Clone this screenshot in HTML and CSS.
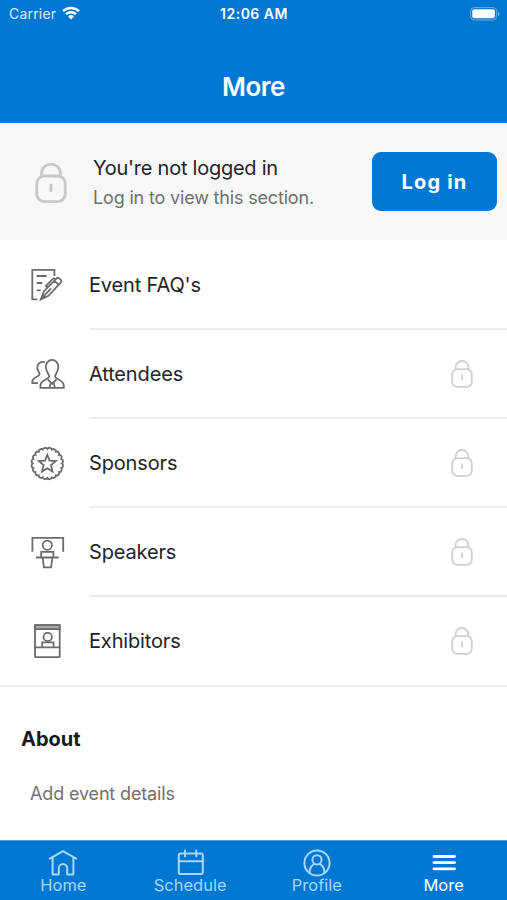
FILE: index.html
```html
<!DOCTYPE html>
<html lang="en">
<head>
<meta charset="utf-8">
<title>More</title>
<link rel="stylesheet" href="styles.css">
</head>
<body>
<svg class="defs" width="0" height="0" aria-hidden="true">
  <symbol id="lock" viewBox="0 0 22 28">
    <rect x="1.2" y="9.2" width="19.6" height="17.6" rx="5.2"/>
    <path d="M4.6 9.4V7.2a6.4 6.2 0 0 1 12.8 0v2.2M11 14.500v5.500"/>
  </symbol>
</svg>
<div class="app">
  <header class="header">
    <div class="status">
      <div class="carrier"><span>Carrier</span>
        <svg class="wifi" viewBox="0 0 18 14"><path d="M1 5.2a11.6 11.6 0 0 1 16 0M4 8.2a7.2 7.2 0 0 1 10 0" fill="none" stroke="#fff" stroke-width="2.4"/><path d="M6 10.5a4.3 4.3 0 0 1 6 0L9 13.5z" fill="#fff"/></svg>
      </div>
      <div class="time">12:06 AM</div>
      <svg class="battery" viewBox="0 0 30 14"><rect x=".6" y=".6" width="26" height="12.4" rx="3.6" fill="none" stroke="#69afe6" stroke-width="1"/><rect x="2.3" y="2.3" width="22.6" height="9" rx="2" fill="#fff"/><path d="M28 4.6v4.6q1.6-.8 1.6-2.3T28 4.6z" fill="#69afe6"/></svg>
    </div>
    <h1>More</h1>
  </header>
  <section class="login">
    <svg class="lock-big"><use href="#lock"/></svg>
    <div class="login-text"><div class="login-title">You're not logged in</div><div class="login-sub">Log in to view this section.</div></div>
    <button class="login-btn">Log in</button>
  </section>
  <ul class="menu">
    <li>
      <svg class="icon" viewBox="0 0 36 36"><path d="M25.400 9V2.900H3.300v29.400h5.200M7.700 9h10M7.700 16h5.500M7.700 23.300h4"/><path d="M11.800 32.400l3.200-8.200L27.700 11.400q1.200-1.200 2.400 0l1.800 1.500q1.200 1.200 0 2.500L19.500 28.800zM25.400 13.800l4.400 4.100M11.800 32.400L22 21.400M18.500 20.500L16.800 19l7-7.200q1.300-1.100 2.500.8"/></svg>
      <div class="row"><span>Event FAQ's</span></div>
    </li>
    <li>
      <svg class="icon" viewBox="0 0 36 36"><path d="M20.200 20.300c0-2-3.300-4.200-3.300-9.300 0-4.200 2.700-7.100 6.200-7.100s6.200 2.900 6.200 7.100c0 5.100-3.200 7.300-3.200 9.300 0 3.500 8.700 3.200 8.700 9.400v2.200H11.400v-2.200c0-6.200 8.800-5.900 8.800-9.400z"/><path d="M18.800 23.500l4.300 4.200 4.400-4.200M21.500 27.700h3.400l1 4.200M21.500 27.700l-1.200 4.200M15.800 6.100c-4.600-.8-7.900 1.700-7.500 6 .2 3 2.400 3.700 2.300 6.100-.1 2.800-7.300 3-7.300 7.100v1.800H9"/></svg>
      <div class="row"><span>Attendees</span><svg class="lock"><use href="#lock"/></svg></div>
    </li>
    <li>
      <svg class="icon" viewBox="0 0 36 36"><g transform="translate(18.300 17.500)"><path d="M14.600 0A2.500 2.500 0 0 1 13.890 4.510A2.500 2.500 0 0 1 11.810 8.580A2.500 2.500 0 0 1 8.580 11.810A2.500 2.500 0 0 1 4.510 13.890A2.500 2.500 0 0 1 0 14.600A2.500 2.500 0 0 1-4.510 13.890A2.500 2.500 0 0 1-8.580 11.810A2.500 2.500 0 0 1-11.810 8.580A2.500 2.500 0 0 1-13.890 4.510A2.500 2.500 0 0 1-14.600 0A2.500 2.500 0 0 1-13.890-4.510A2.500 2.500 0 0 1-11.810-8.580A2.500 2.500 0 0 1-8.580-11.810A2.500 2.500 0 0 1-4.510-13.890A2.500 2.500 0 0 1 0-14.600A2.500 2.500 0 0 1 4.510-13.890A2.500 2.500 0 0 1 8.580-11.810A2.500 2.500 0 0 1 11.810-8.580A2.500 2.500 0 0 1 13.890-4.510A2.500 2.500 0 0 1 14.600 0z"/><path d="M0-8.600l2.300 5.800 6.200.4-4.800 4L5.300 8 0 4.700-5.300 8l1.600-6.400-4.800-4 6.200-.4z"/></g></svg>
      <div class="row"><span>Sponsors</span><svg class="lock"><use href="#lock"/></svg></div>
    </li>
    <li>
      <svg class="icon" viewBox="0 0 36 36"><path d="M3.400 16.700V2.800h30.800v13.900M12.200 22v-5.200h12.200V22M7 22.500h22.700M13.600 22.500l1.300 9.900h7.200l1.300-9.900"/><circle cx="18.300" cy="10.200" r="4.600"/></svg>
      <div class="row"><span>Speakers</span><svg class="lock"><use href="#lock"/></svg></div>
    </li>
    <li>
      <svg class="icon" viewBox="0 0 36 36"><path d="M6 2.200h24.700v3.900H6z" fill="#aaa"/><rect x="6" y="2.200" width="24.700" height="32" rx=".8"/><path d="M6 24.300h24.700M13.200 24.300v-4.900h11.400v4.900"/><circle cx="18.700" cy="14" r="4.200"/></svg>
      <div class="row"><span>Exhibitors</span><svg class="lock"><use href="#lock"/></svg></div>
    </li>
  </ul>
  <section class="about"><h2>About</h2><p>Add event details</p></section>
  <nav class="tabs">
    <div class="tab"><svg viewBox="0 0 30 30"><path d="M1.800 10.600L15 3.200l13.200 7.400M4.600 9.200v17.400h6.200v-6.300a4 4 0 0 1 8.400 0v6.300h6.200V9.200"/></svg><span>Home</span></div>
    <div class="tab"><svg viewBox="0 0 30 30"><rect x="3.800" y="5.500" width="24" height="20.500" rx="1.800"/><path d="M3.800 13.200h24M10 2.600v5.800M21.300 2.600v5.800"/></svg><span>Schedule</span></div>
    <div class="tab"><svg viewBox="0 0 30 30"><circle cx="15" cy="15" r="12.600"/><circle cx="15" cy="11.800" r="4.600"/><path d="M7.500 25c0-5 2.900-8.200 5-9.200M22.500 25c0-5-2.900-8.200-5-9.200"/></svg><span>Profile</span></div>
    <div class="tab active"><svg viewBox="0 0 30 30"><path d="M5 8.500h20.500M5 14.700h20.500M5 20.900h20.500" stroke-width="2.800"/></svg><span>More</span></div>
  </nav>
</div>
</body>
</html>
```
FILE: styles.css
```css
* { box-sizing: border-box; }
body { margin: 0; background: #fff; font-family: Inter, "Liberation Sans", sans-serif; color: #212427; }
svg { display: block; flex: none; fill: none; }
.defs { position: absolute; }
.app { width: 507px; height: 900px; display: flex; flex-direction: column; overflow: hidden; }
.header { height: 123px; background: #0077d1; color: #fff; flex: none; }
.status { height: 28px; padding: 0 7px 0 9px; display: grid; grid-template-columns: 1fr auto 1fr; align-items: center; font-size: 14px; }
.carrier { display: flex; align-items: center; gap: 6px; letter-spacing: .2px; color: #d9f0ff; }
.carrier span, .time { margin-top: -1px; }
.wifi { width: 18px; height: 14px; margin-top: -2px; }
.time { font-weight: 600; letter-spacing: .5px; margin-left: -1px; }
.battery { width: 30px; height: 14px; justify-self: end; margin-top: -1px; }
h1 { margin: 43px 0 0; font-size: 26px; line-height: 32px; font-weight: 600; text-align: center; letter-spacing: -.5px; }
.login { height: 117px; flex: none; background: #f7f7f7; display: flex; align-items: center; padding: 0 10px 0 35px; }
.lock-big { width: 32px; height: 42px; margin-top: 3px; stroke: #c8c8c8; stroke-width: 2; }
.login-text { margin-left: 26px; flex: 1; white-space: nowrap; margin-top: 2px; }
.login-title { font-size: 20px; line-height: 30px; letter-spacing: -.25px; }
.login-sub { font-size: 18px; line-height: 30px; color: #707070; letter-spacing: -.17px; }
.login-btn { width: 125px; height: 59px; padding: 0; border: 0; border-radius: 9px; background: #0077d1; color: #fff; font: 700 20px Inter, sans-serif; letter-spacing: 1.2px; }
.menu { list-style: none; margin: 0; padding: 0; flex: none; border-bottom: 2px solid #ececec; }
.menu li { height: 89px; display: flex; align-items: center; padding-left: 29px; }
.menu li:first-child { height: 90px; }
.menu li:last-child { height: 88px; }
.icon { width: 36px; height: 36px; stroke: #6c6c6c; stroke-width: 1.8; }
.menu li:nth-child(2) .icon { margin-top: -1px; }
.row { flex: 1; height: 100%; margin-left: 24px; padding: 1px 34px 0 0; display: flex; align-items: center; justify-content: space-between; font-size: 20px; letter-spacing: -.15px; border-bottom: 2px solid #ececec; }
.menu li:last-child .row { border-bottom: 0; padding-top: 0; }
.lock { width: 22px; height: 28px; stroke: #cfcfcf; stroke-width: 1.8; }
.about { flex: 1; padding: 38px 21px 0; }
h2 { margin: 0; font-size: 20px; line-height: 28px; font-weight: 700; color: #17191c; }
.about p { margin: 27px 0 0 9px; font-size: 18px; line-height: 28px; color: #707070; letter-spacing: -.15px; }
.tabs { height: 60px; flex: none; background: #0077d1; display: grid; grid-template-columns: repeat(4, 1fr); border-top: 1px solid #4aa0df; }
.tab { display: flex; flex-direction: column; align-items: center; color: #a5d7fb; font-size: 16.5px; line-height: 20px; padding-top: 7px; }
.tab svg { width: 30px; height: 30px; stroke: currentColor; stroke-width: 2; stroke-linecap: round; stroke-linejoin: round; }
.tab span { margin-top: -3px; }
.active { color: #fff; }
```
